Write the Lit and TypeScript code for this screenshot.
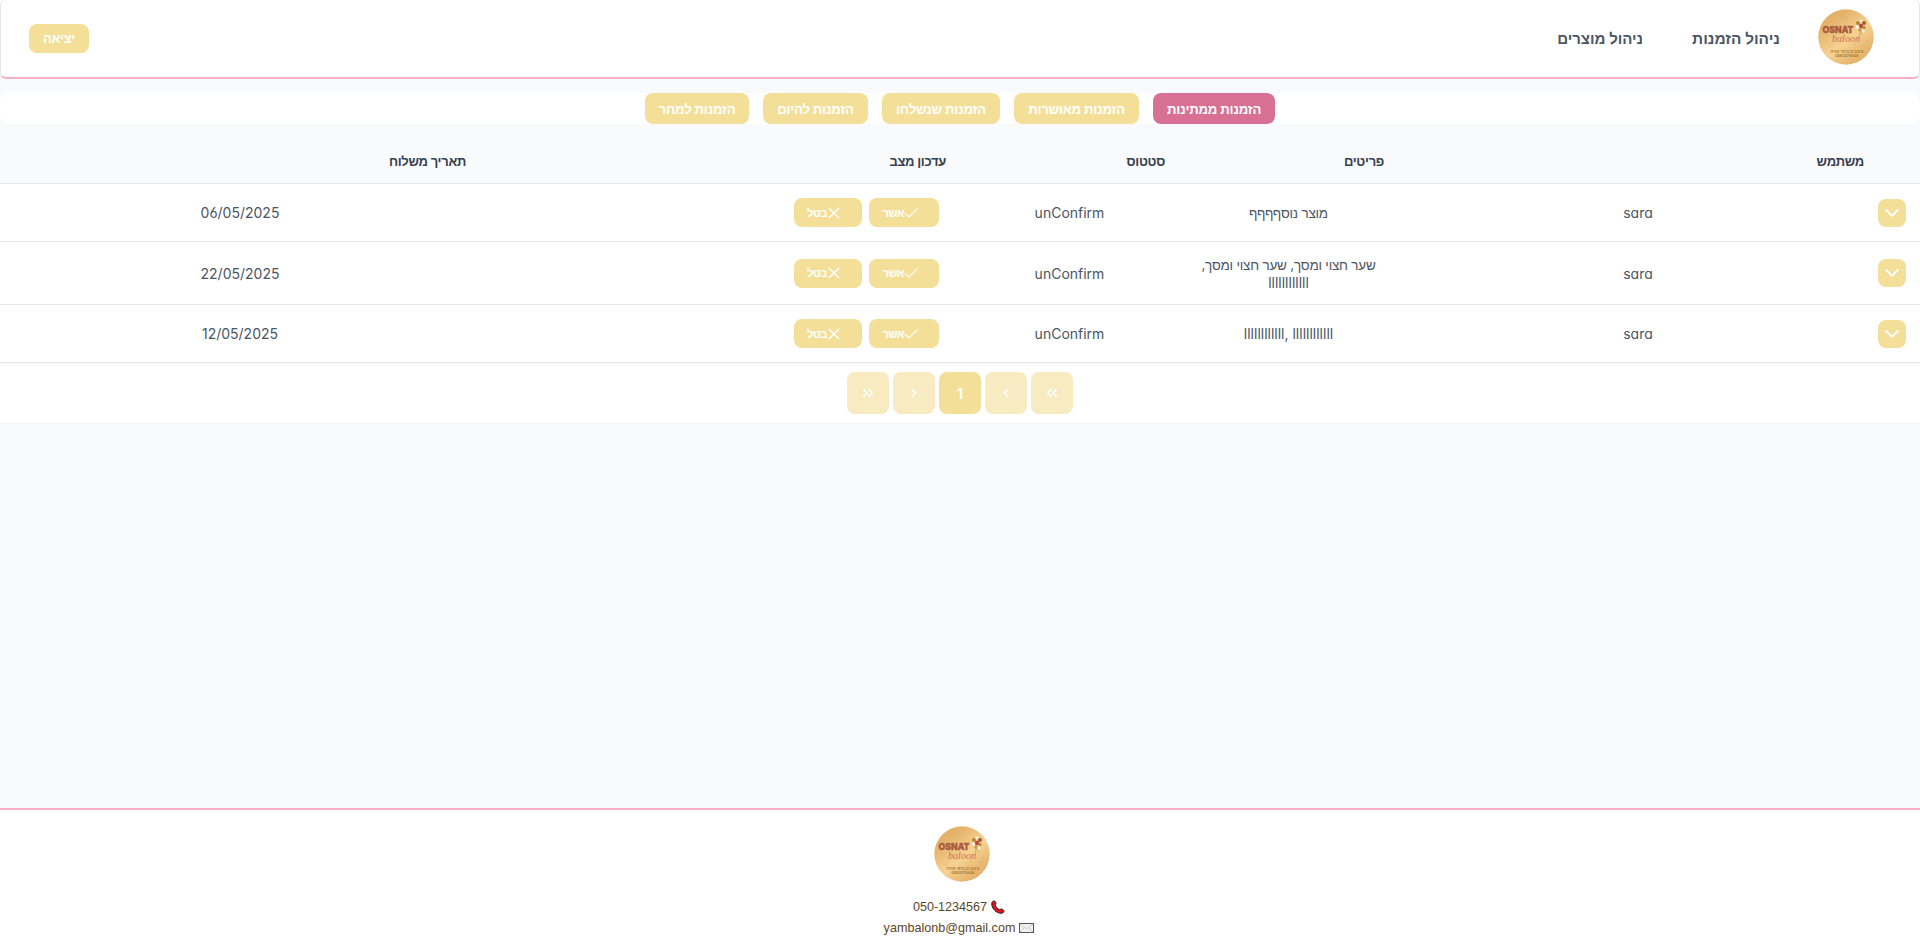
import { LitElement, html, css, svg } from "lit";
import { customElement } from "lit/decorators.js";

const bars = "l".repeat(12);
const rows = [
  { user: "sara", heb: "מוצר נוס" + "ף".repeat(4), lat: "", date: "06/05/2025" },
  { user: "sara", heb: "שער חצוי ומסך, שער חצוי ומסך, ", lat: bars, date: "22/05/2025" },
  { user: "sara", heb: "", lat: bars + ", " + bars, date: "12/05/2025" },
];
const tabs = [
  { label: "הזמנות ממתינות", w: 122 },
  { label: "הזמנות מאושרות", w: 125 },
  { label: "הזמנות שנשלחו", w: 118 },
  { label: "הזמנות להיום", w: 105 },
  { label: "הזמנות למחר", w: 104 },
];

const check = svg`<path d="M4.86199 11.5948C4.78717 11.5923 4.71366 11.5745 4.64596 11.5426C4.57826 11.5107 4.51779 11.4652 4.46827 11.4091L0.753985 7.69483C0.683167 7.64891 0.623706 7.58751 0.580092 7.51525C0.536478 7.44299 0.509851 7.36177 0.502221 7.27771C0.49459 7.19366 0.506156 7.10897 0.536046 7.03004C0.565935 6.95111 0.613367 6.88 0.674759 6.82208C0.736151 6.76416 0.8099 6.72095 0.890436 6.69571C0.970973 6.67046 1.05619 6.66385 1.13966 6.67635C1.22313 6.68886 1.30266 6.72017 1.37226 6.76792C1.44186 6.81567 1.4997 6.8786 1.54141 6.95197L4.86199 10.2503L12.6397 2.49483C12.7444 2.42694 12.8689 2.39617 12.9932 2.40745C13.1174 2.41873 13.2343 2.47141 13.3251 2.55705C13.4159 2.64268 13.4753 2.75632 13.4938 2.87973C13.5123 3.00315 13.4888 3.1292 13.4271 3.23768L5.2557 11.4091C5.20618 11.4652 5.14571 11.5107 5.07801 11.5426C5.01031 11.5745 4.9368 11.5923 4.86199 11.5948Z" fill="currentColor"/>`;
const times = svg`<path d="M8.01186 7.00933L12.27 2.75116C12.341 2.68501 12.398 2.60524 12.4375 2.51661C12.4769 2.42798 12.4982 2.3323 12.4999 2.23529C12.5016 2.13827 12.4838 2.0419 12.4474 1.95194C12.4111 1.86197 12.357 1.78024 12.2884 1.71163C12.2198 1.64302 12.138 1.58893 12.0481 1.55259C11.9581 1.51625 11.8617 1.4984 11.7647 1.50011C11.6677 1.50182 11.572 1.52306 11.4834 1.56255C11.3948 1.60204 11.315 1.65898 11.2488 1.72997L6.99067 5.98814L2.7325 1.72997C2.59553 1.60234 2.41437 1.53286 2.22718 1.53616C2.03999 1.53946 1.8614 1.61529 1.72901 1.74767C1.59663 1.88006 1.5208 2.05865 1.5175 2.24584C1.5142 2.43303 1.58368 2.61419 1.71131 2.75116L5.96948 7.00933L1.71131 11.2675C1.576 11.403 1.5 11.5866 1.5 11.7781C1.5 11.9696 1.576 12.1532 1.71131 12.2887C1.84679 12.424 2.03043 12.5 2.2219 12.5C2.41338 12.5 2.59702 12.424 2.7325 12.2887L6.99067 8.03052L11.2488 12.2887C11.3843 12.424 11.568 12.5 11.7594 12.5C11.9509 12.5 12.1346 12.424 12.27 12.2887C12.4053 12.1532 12.4813 11.9696 12.4813 11.7781C12.4813 11.5866 12.4053 11.403 12.27 11.2675L8.01186 7.00933Z" fill="currentColor"/>`;

@customElement("brand-logo")
class BrandLogo extends LitElement {
  static styles = css`
    :host { display: block; width: 56px; height: 56px; direction: ltr; }
    svg { display: block; font-family: "Liberation Sans", sans-serif; }
    .name { font: 800 9.2px Inter, sans-serif; fill: #a9593c; stroke: #a9593c; stroke-width: 0.4; }
    .script { font: italic 10px "Liberation Serif", serif; fill: #cf7350; }
    .small { font-size: 4.4px; font-weight: 700; fill: #a87a2c; }
  `;
  render() {
    return html`<svg width="56" height="56" viewBox="0 0 56 56">
      <defs>
        <linearGradient id="g" x1="0.1" y1="0" x2="0.9" y2="1">
          <stop offset="0" stop-color="#e0ae66" />
          <stop offset="0.22" stop-color="#e5b46c" />
          <stop offset="0.55" stop-color="#f6d293" />
          <stop offset="0.8" stop-color="#e8b872" />
          <stop offset="1" stop-color="#dfa660" />
        </linearGradient>
      </defs>
      <circle cx="28" cy="28" r="27.7" fill="url(#g)" />
      <text class="name" x="4.5" y="24" textLength="31" lengthAdjust="spacingAndGlyphs">OSNAT</text>
      <text class="script" x="14" y="33" textLength="28" lengthAdjust="spacingAndGlyphs">baloon</text>
      <g>
        <path d="M42 22l-1 8M43 22l1 4" stroke="#b58a4a" stroke-width=".5" />
        <circle cx="40" cy="14" r="2" fill="#b88434" /><circle cx="43" cy="12" r="1.6" fill="#fff3e0" />
        <circle cx="46" cy="14" r="2" fill="#a9593c" /><circle cx="43" cy="17" r="2.2" fill="#b5483c" />
        <circle cx="39.500" cy="18" r="1.800" fill="#fff6ea" /><circle cx="46" cy="18.500" r="1.600" fill="#b88434" />
        <circle cx="42" cy="21" r="1.800" fill="#c99a4a" /><circle cx="45" cy="22" r="1.500" fill="#fbeedd" />
      </g>
      <g fill="#c08a3c"><circle cx="8" cy="33" r=".5" /><circle cx="12" cy="38" r=".5" /><circle cx="37" cy="35" r=".5" /><circle cx="46" cy="36" r=".6" /><circle cx="49" cy="32" r=".5" /><circle cx="28" cy="8" r=".5" /></g>
      <text class="small" x="29" y="43.500" text-anchor="middle" textLength="33" lengthAdjust="spacingAndGlyphs">עיצובים בדמי אורח</text>
      <text class="small" x="29" y="48" text-anchor="middle" textLength="23" lengthAdjust="spacingAndGlyphs">0583276606</text>
    </svg>`;
  }
}

@customElement("app-root")
class AppRoot extends LitElement {
  static styles = css`
    :host { display: flex; flex-direction: column; direction: rtl; height: 943px; background: #f9fafb;
      font: 14px Inter, "Liberation Sans", sans-serif; font-feature-settings: "cv02", "cv03", "cv04", "cv11"; color: #4b5563; }
    * { box-sizing: border-box; }
    button { font: 700 14px Inter, "Liberation Sans", sans-serif; font-feature-settings: inherit; color: #fff; background: #f4df99; border: 0; border-radius: 8px; padding: 0;
      display: flex; align-items: center; justify-content: center; white-space: nowrap; }
    .nav { height: 79px; flex: none; background: #fff; border: 1px solid #e5e7eb; border-top: 0; border-bottom: 2px solid #f7afc3; border-radius: 6px;
      display: flex; align-items: center; padding: 0 45px 4px 28px; }
    .link { font-weight: 600; white-space: nowrap; margin-top: 3px; }
    .first { margin-right: 38px; font-size: 15.4px; }
    .second { margin-right: 49px; font-size: 15px; }
    .exit { margin-right: auto; width: 60px; height: 29px; margin-top: 3px; font-size: 13px; letter-spacing: -0.3px; }
    .tabs { margin-top: 14px; height: 31px; flex: none; background: #fff; border-radius: 10px; display: flex; gap: 14px; justify-content: center; }
    .tab { height: 31px; font-size: 13.2px; letter-spacing: -0.2px; }
    .on { background: #d87093; }
    .grid { display: grid; grid-template-columns: 42px 480px 219px 219px 480px 480px; }
    .head { height: 60px; border-bottom: 1px solid #e5e7eb; align-items: center; font-weight: 600; color: #374151; padding-top: 14px; font-size: 13px; letter-spacing: -0.3px; }
    .head span { padding-right: 14px; }
    .row { background: #fff; border-bottom: 1px solid #e5e7eb; height: 58px; align-items: center; text-align: center; }
    .tall { height: 63px; }
    .items { padding: 1px 14px 0; line-height: 17px; }
    .heb { font-size: 13.5px; letter-spacing: -0.22px; }
    .exp { width: 28px; height: 28px; margin-right: 14px; }
    .acts { display: flex; gap: 7px; padding-right: 21px; }
    .act { height: 29px; font-size: 11.5px; letter-spacing: -0.6px; justify-content: flex-start; }
    .ok { width: 70px; padding-right: 21px; }
    .no { width: 68px; padding-right: 21px; }
    .pager { background: #fff; height: 61px; border-bottom: 1px solid #f3f4f6; display: flex; gap: 4px; justify-content: center; align-items: center; }
    .pg { width: 42px; height: 42px; font-size: 14px; }
    .dim { opacity: 0.6; }
    .foot { margin-top: auto; height: 135px; flex: none; background: #fff; border-top: 2px solid #f7afc3; display: flex; flex-direction: column; align-items: center; padding-top: 16px;
      font: 12.6px "Liberation Sans", sans-serif; color: #5e4528; }
    .mark { margin-left: 4px; }
    .line { display: flex; align-items: center; gap: 4px; height: 21px; margin-left: -1px; padding-right: 1px; }
    .phone { margin-top: 14px; }
  `;
  render() {
    const chev = (d: string) => html`<svg width="12" height="10" viewBox="0 0 14 12" fill="none" stroke="currentColor" stroke-width="1.900" stroke-linecap="round" stroke-linejoin="round"><path d=${d} /></svg>`;
    return html`
      <header class="nav">
        <brand-logo></brand-logo>
        <span class="link first">ניהול הזמנות</span>
        <span class="link second">ניהול מוצרים</span>
        <button class="exit">יציאה</button>
      </header>
      <nav class="tabs">
        ${tabs.map((t, i) => html`<button class="tab ${i === 0 ? "on" : ""}" style="width:${t.w}px">${t.label}</button>`)}
      </nav>
      <div class="grid head"><i></i><span>משתמש</span><span>פריטים</span><span>סטטוס</span><span>עדכון מצב</span><span>תאריך משלוח</span></div>
      ${rows.map((r, i) => html`<div class="grid row ${i === 1 ? "tall" : ""}">
        <button class="exp"><svg width="14" height="14" viewBox="0 0 14 14" fill="none" stroke="currentColor" stroke-width="1.900" stroke-linecap="round" stroke-linejoin="round"><path d="M1.200 4L7 9.800L12.800 4" /></svg></button>
        <span>${r.user}</span>
        <span class="items"><span class="heb">${r.heb}</span>${r.lat}</span>
        <span>unConfirm</span>
        <div class="acts">
          <button class="act ok"><svg width="14" height="14" viewBox="0 0 14 14">${check}</svg>אשר</button>
          <button class="act no"><svg width="14" height="14" viewBox="0 0 14 14">${times}</svg>בטל</button>
        </div>
        <span>${r.date}</span>
      </div>`)}
      <div class="pager">
        <button class="pg dim">${chev("M6 2L2 6L6 10M12 2L8 6L12 10")}</button>
        <button class="pg dim">${chev("M9 2L5 6L9 10")}</button>
        <button class="pg">1</button>
        <button class="pg dim">${chev("M5 2L9 6L5 10")}</button>
        <button class="pg dim">${chev("M2 2L6 6L2 10M8 2L12 6L8 10")}</button>
      </div>
      <footer class="foot">
        <brand-logo class="mark"></brand-logo>
        <div class="line phone">
          <svg width="14" height="14" viewBox="0 0 14 14"><path d="M1 2.500C2 .500 4 .500 4.800 2.500C5.300 4 4.300 4.500 4.500 5.500C5 7.500 6.500 9 8.500 9.500C9.500 9.700 10 8.500 11.300 9.200C13.500 10.300 13.500 12 11.500 13C8 14 4 11.500 2.200 8.500C1 6.500 .400 4.300 1 2.500Z" fill="#e0161f" stroke="#1a0a0a" stroke-width=".9" /></svg>
          <span>050-1234567</span>
        </div>
        <div class="line">
          <svg width="15" height="12" viewBox="0 0 15 12"><rect x=".5" y="1.500" width="14" height="9" fill="#f2f2f2" stroke="#555" /><path d="M1 2L7.500 7L14 2M1 10L5.500 5.500M14 10L9.500 5.500" stroke="#bbb" fill="none" stroke-width=".7" /></svg>
          <span>yambalonb@gmail.com</span>
        </div>
      </footer>`;
  }
}
